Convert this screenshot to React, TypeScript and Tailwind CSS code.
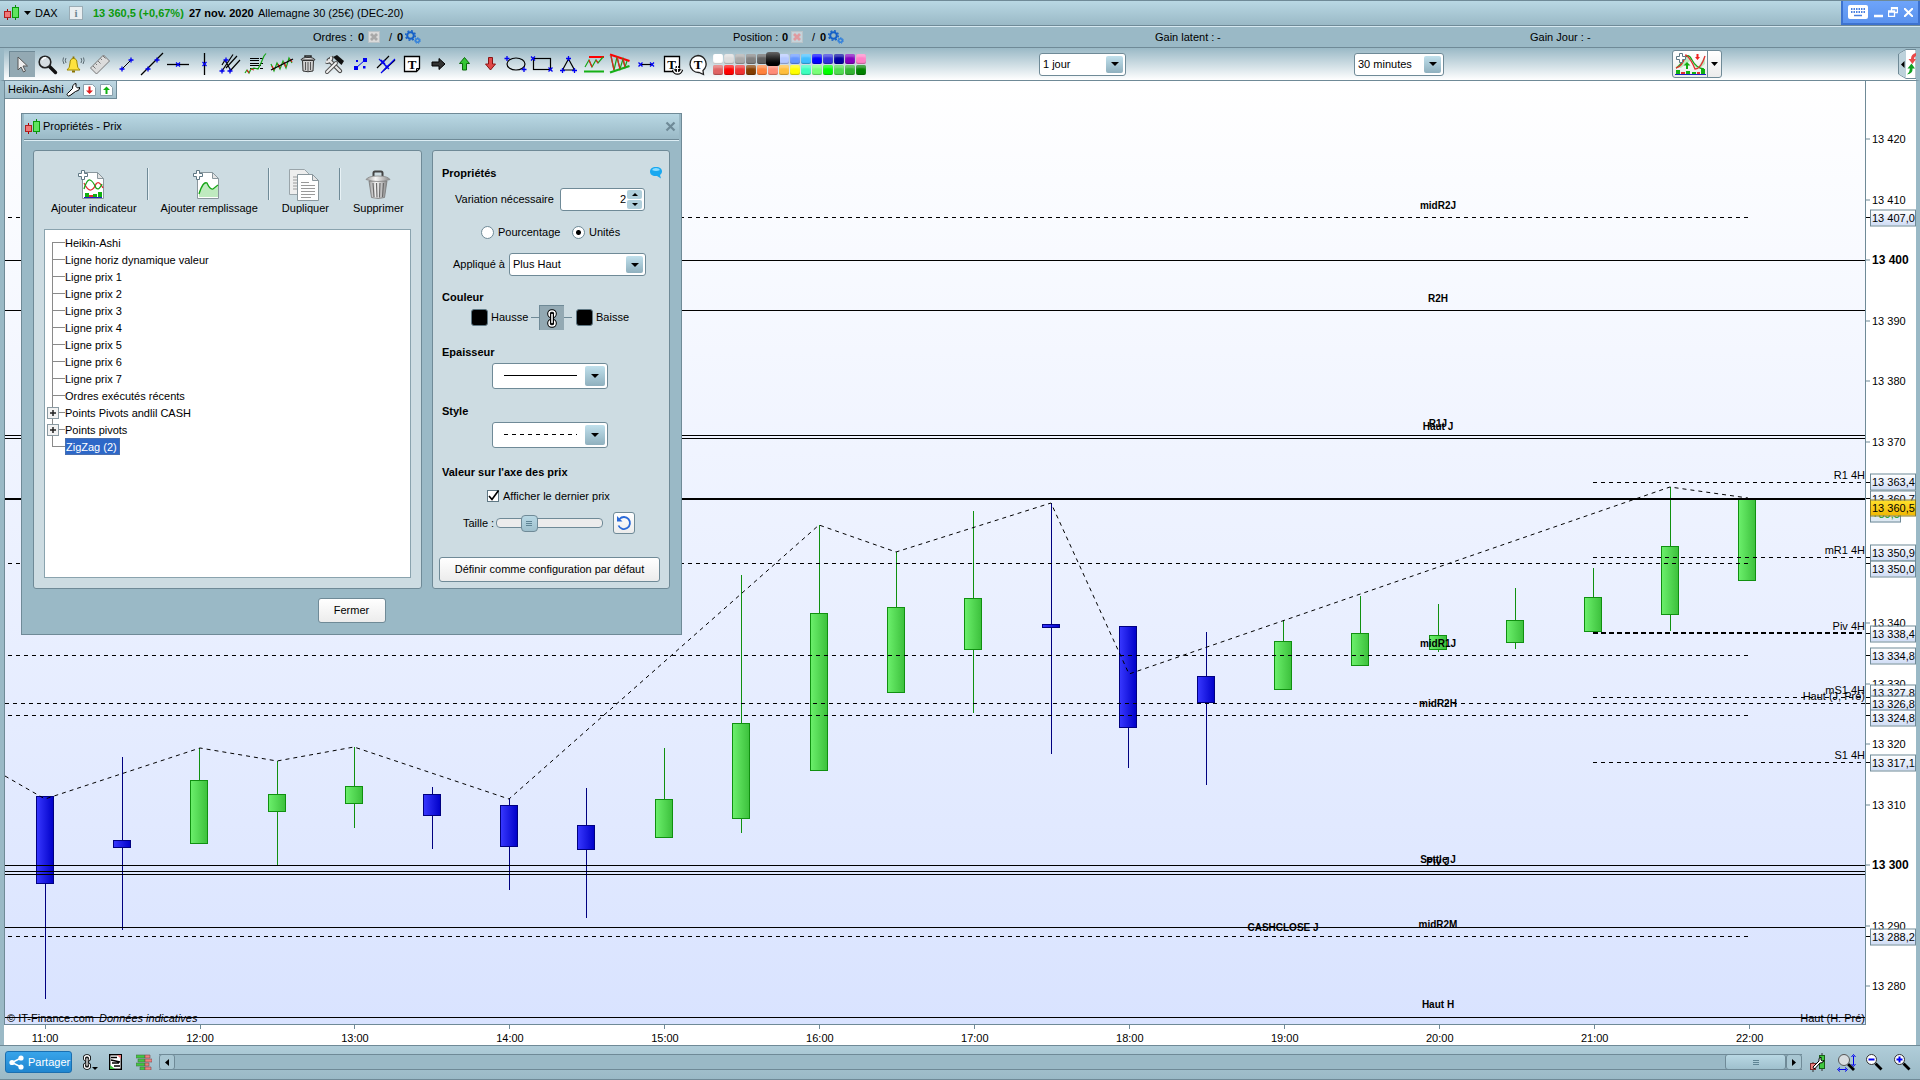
import React from "react";

/* ---------- shared drawing helpers ---------- */

const Plus = ({ x, y }: { x: number; y: number }) => (
  <path d={`M${x - 2.5} ${y}h5M${x} ${y - 2.5}v5`} stroke="#0000f0" strokeWidth="1.3" />
);
const Cross = ({ x, y }: { x: number; y: number }) => (
  <path d={`M${x - 2} ${y - 2}l4 4M${x + 2} ${y - 2}l-4 4`} stroke="#0000f0" strokeWidth="1.3" />
);

const CandlesIcon = () => (
  <svg width="16" height="18" viewBox="0 0 16 18" fill="none" className="shrink-0">
    <path d="M3.5 5v11" stroke="#b00000" />
    <rect x="0.5" y="7.500" width="6" height="6" fill="#f07878" stroke="#b02020" />
    <path d="M11.500 1v15" stroke="#0a8a0a" />
    <rect x="8.500" y="3.500" width="6" height="10" fill="#5fe45f" stroke="#0a9a0a" />
  </svg>
);

const GearsIcon = () => (
  <svg width="16" height="14" viewBox="0 0 16 14" fill="none" className="shrink-0">
    <circle cx="5.500" cy="5.500" r="3.300" stroke="#1560c8" strokeWidth="2" />
    <circle cx="5.500" cy="5.500" r="4.800" stroke="#1560c8" strokeWidth="1.500" strokeDasharray="1.900 1.870" />
    <circle cx="12.500" cy="10.500" r="1.800" stroke="#2f7fdd" strokeWidth="1.400" />
    <circle cx="12.500" cy="10.500" r="2.900" stroke="#2f7fdd" strokeWidth="1" strokeDasharray="1.300 1.300" />
  </svg>
);

const CancelIcon = ({ color, back }: { color: string; back: string }) => (
  <svg width="12" height="12" viewBox="0 0 12 12" className="shrink-0">
    <rect x="0.500" y="0.500" width="11" height="11" fill={back} stroke="#b9c3c8" />
    <path d="M3 3l6 6M9 3l-6 6" stroke={color} strokeWidth="2.800" />
  </svg>
);

const ChainIcon = ({ w = 12, h = 19 }: { w?: number; h?: number }) => (
  <svg width={w} height={h} viewBox="0 0 12 19" fill="none">
    <g stroke="#000" strokeWidth="3.600">
      <rect x="3" y="2" width="6" height="5.500" rx="2.700" />
      <rect x="3" y="11.500" width="6" height="5.500" rx="2.700" />
    </g>
    <g stroke="#fff" strokeWidth="1.600">
      <rect x="3" y="2" width="6" height="5.500" rx="2.700" />
      <rect x="3" y="11.500" width="6" height="5.500" rx="2.700" />
    </g>
    <path d="M6 5.500v8" stroke="#000" strokeWidth="4" strokeLinecap="round" />
    <path d="M6 5.500v8" stroke="#fff" strokeWidth="1.600" strokeLinecap="round" />
  </svg>
);

const TrashIcon = () => (
  <svg width="26" height="30" viewBox="0 0 26 30" fill="none">
    <defs>
      <linearGradient id="bin">
        <stop offset="0" stopColor="#9c9c9c" />
        <stop offset="0.400" stopColor="#f6f6f6" />
        <stop offset="1" stopColor="#8a8a8a" />
      </linearGradient>
    </defs>
    <path d="M8.500 6.500V3q0-1.500 1.500-1.500h6q1.500 0 1.500 1.500v3.500" stroke="#444" strokeWidth="2" />
    <path d="M4 11h18l-2.500 16.500q-6.500 2-13 0z" fill="url(#bin)" stroke="#777" strokeWidth=".8" />
    <path d="M8 13l1 14M11.500 13l.5 14.500M15 13l-.5 14.500M18.500 13l-1 14" stroke="#6a6a6a" strokeWidth="1.200" />
    <path d="M1 9.500Q3 6 13 6t12 3.500Q13 13.500 1 9.500z" fill="url(#bin)" stroke="#888" strokeWidth=".8" />
  </svg>
);

/* ---------- drawing toolbar ---------- */

const tools: { name: string; icon: React.ReactNode }[] = [
  {
    name: "Pointeur",
    icon: <path d="M9 6v13l3-3 2.500 5 2-1-2.500-5h4.500z" fill="#eee" stroke="#555" />,
  },
  {
    name: "Zoom",
    icon: (
      <>
        <path d="M14.500 15.500l6 6" stroke="#111" strokeWidth="3.400" strokeLinecap="round" />
        <circle cx="10" cy="11" r="5.800" fill="#d5dde1" stroke="#222" strokeWidth="1.600" />
        <path d="M7 9q1.500-2.500 4-2.500" stroke="#fff" strokeWidth="1.500" />
      </>
    ),
  },
  {
    name: "Alerte",
    icon: (
      <>
        <path d="M6 19q3-2 3-7 0-4.500 3.500-4.500T16 12q0 5 3 7z" fill="#ffe23d" stroke="#a08a00" />
        <path d="M12.500 5.500v2M11 20.500h3" stroke="#8a7400" strokeWidth="1.800" />
        <path d="M5 7q-1.500 2 0 5M2.500 6.500q-1.500 3 .5 6.500M20 7q1.500 2 0 5M22.500 6.500q1.500 3-.5 6.500" stroke="#5b6b73" />
      </>
    ),
  },
  {
    name: "Règle",
    icon: (
      <>
        <path d="M3.500 17L16.500 4l6 6L9.500 23z" fill="#dcdcdc" stroke="#777" />
        <path d="M6 15l2.500 2.500M8.500 12.500l1.500 1.500M11 10l2.500 2.500M13.500 7.500L15 9M16 5l2.500 2.500" stroke="#777" />
      </>
    ),
  },
  { name: "Segment", icon: <><path d="M9 18l9-9" stroke="#000" /><Plus x={9} y={18} /><Plus x={18} y={9} /></> },
  { name: "Droite", icon: <><path d="M2 24L24 2" stroke="#000" strokeWidth="1.300" /><Plus x={9} y={18} /><Plus x={18} y={9} /></> },
  { name: "Ligne horizontale", icon: <><path d="M2 13.500h22" stroke="#000" strokeWidth="1.300" /><Cross x={13} y={13.5} /></> },
  { name: "Ligne verticale", icon: <><path d="M13.500 2v22" stroke="#000" strokeWidth="1.300" /><Cross x={13.5} y={13} /></> },
  {
    name: "Fourche",
    icon: (
      <>
        <path d="M5 20L16 3.500M8 9l-3 5M9 17l11-12M13 20l10-11M8 9l6 11" stroke="#000" strokeWidth="1.200" />
        <Plus x={9} y={9} /><Plus x={5} y={20} /><Plus x={13} y={20} />
      </>
    ),
  },
  {
    name: "Retracement",
    icon: (
      <>
        <path d="M7 7.500h13M7 9.500h9M7 12.500h13M7 14.500h11M7 17.500h13" stroke="#000" strokeDasharray="9 1" />
        <path d="M2 22l2-3 2 3 2-4 3-1 4 1 3-6 3-7 2-2.500" stroke="#16a516" strokeWidth="1.200" />
        <path d="M4 19l2 3M8 18l3 1" stroke="#e02020" strokeWidth="1.300" />
      </>
    ),
  },
  {
    name: "Régression",
    icon: (
      <>
        <path d="M2 13l3 7 3-8 3 6 3-8 3 7 3-10 3 5" stroke="#16a516" strokeWidth="1.200" />
        <path d="M3 15l2 4M9 13l2 4M15 11l2 5M21 8l2 3" stroke="#e02020" strokeWidth="1.300" />
        <path d="M2 19L24 8" stroke="#000" strokeWidth="1.300" />
      </>
    ),
  },
  {
    name: "Supprimer les objets",
    icon: (
      <>
        <path d="M10 6.500V5h6v1.500" stroke="#222" strokeWidth="1.500" />
        <path d="M7.500 9.500h11l-.5 10.500q-5 1.500-10 0z" fill="#d0d0d0" stroke="#333" />
        <path d="M10.500 11v8M13 11v9M15.500 11v8" stroke="#555" />
        <path d="M6 9q.5-2.500 7-2.500T20 9z" fill="#e4e4e4" stroke="#333" />
      </>
    ),
  },
  {
    name: "Configurer",
    icon: (
      <>
        <path d="M8 9l11 11" stroke="#444" strokeWidth="4.400" strokeLinecap="round" />
        <path d="M5 10.500a4 4 0 0 0 5-5" stroke="#444" strokeWidth="4.400" />
        <path d="M8 9l11 11" stroke="#e6e6e6" strokeWidth="2.400" strokeLinecap="round" />
        <path d="M5 10.500a4 4 0 0 0 5-5" stroke="#e6e6e6" strokeWidth="2.400" />
        <path d="M6 21l9-9" stroke="#555" strokeWidth="4" strokeLinecap="round" />
        <path d="M6 21l9-9" stroke="#f4f4f4" strokeWidth="2" strokeLinecap="round" />
        <path d="M12 6l4-2 7 6-2.500 4-5-4.500z" fill="#111" />
      </>
    ),
  },
  {
    name: "Segment mesuré",
    icon: (
      <>
        <path d="M9 17l9-8" stroke="#0000f0" />
        <path d="M7 15h4v4H7zM16 7h4v4h-4zM9 9h2v2H9zM16 15h2.500v2.500H16z" fill="#0000f0" />
      </>
    ),
  },
  {
    name: "Canal",
    icon: (
      <>
        <path d="M4 17L16 5M10 20L22 9" stroke="#000" strokeWidth="1.200" />
        <path d="M8 22L22 8M6 8l9 9" stroke="#0000f0" strokeWidth="1.200" />
        <Cross x={10} y={11} /><Cross x={14} y={16} />
      </>
    ),
  },
  {
    name: "Texte",
    icon: (
      <>
        <path d="M5.500 5.500h15v12l-3 3h-12z" fill="#fff" stroke="#000" strokeWidth="1.300" />
        <path d="M20 17.500h-2.500V20" stroke="#000" />
        <text x="13" y="17.500" fontSize="13" fontWeight="bold" textAnchor="middle" fontFamily="Liberation Serif, serif" fill="#000">T</text>
      </>
    ),
  },
  { name: "Flèche droite", icon: <path d="M7 11h7V7.500l6 5.500-6 5.500V15H7z" fill="#333" stroke="#000" /> },
  { name: "Flèche haut", icon: <path d="M13.500 6.500l5 6h-3v6.500h-4v-6.500h-3z" fill="#34c634" stroke="#0a6a0a" /> },
  { name: "Flèche bas", icon: <path d="M13.500 19l5-6h-3V6.500h-4V13h-3z" fill="#e04848" stroke="#8a1414" /> },
  { name: "Ellipse", icon: <><ellipse cx="13" cy="13" rx="9" ry="6" stroke="#000" strokeWidth="1.200" /><Plus x={4} y={7.5} /><Plus x={21} y={18.5} /></> },
  { name: "Rectangle", icon: <><rect x="4.500" y="7.500" width="17" height="11" stroke="#000" strokeWidth="1.200" /><Cross x={4} y={7.5} /><Cross x={21.5} y={18.5} /></> },
  { name: "Triangle", icon: <><path d="M7.500 19L13.500 8l6 11z" stroke="#000" strokeWidth="1.200" /><Plus x={13.5} y={7.5} /><Plus x={7.5} y={19.5} /><Plus x={19.5} y={19.5} /></> },
  {
    name: "Support résistance",
    icon: (
      <>
        <path d="M8 6h15" stroke="#f00" strokeWidth="2" />
        <path d="M3 20.500h20" stroke="#16b016" strokeWidth="2" />
        <path d="M4 16l4-7 3 7 4-7 2 3 5-6" stroke="#16a516" strokeWidth="1.200" />
        <path d="M8 9l3 7M15 9l2 3" stroke="#e02020" strokeWidth="1.200" />
      </>
    ),
  },
  {
    name: "Triangle de prix",
    icon: (
      <>
        <path d="M3 3.500L22.500 10" stroke="#f00" strokeWidth="2.200" />
        <path d="M3 21.500L22.500 15" stroke="#16b016" strokeWidth="2.200" />
        <path d="M4 5l3 14 3-13 3 12 3-10 2 8 2-6" stroke="#16a516" strokeWidth="1.200" />
        <path d="M4 5l3 14M10 6l3 12M16 8l2 8" stroke="#e02020" strokeWidth="1.200" />
      </>
    ),
  },
  { name: "Mesure horizontale", icon: <><path d="M8 13.500h11" stroke="#000" strokeWidth="1.200" /><Cross x={7.5} y={13.5} /><Cross x={19} y={13.5} /></> },
  {
    name: "Texte ancré",
    icon: (
      <>
        <path d="M5.500 5.500h15v15h-15z" fill="#fff" stroke="#000" strokeWidth="1.300" />
        <text x="12.500" y="17.500" fontSize="13" fontWeight="bold" textAnchor="middle" fontFamily="Liberation Serif, serif" fill="#000">T</text>
        <path d="M18.500 15v7M16.500 17.500h4M14.500 18.500q1 3.500 4 3.500t4-3.500" stroke="#000" strokeWidth="3.400" />
        <path d="M18.500 15v7M16.500 17.500h4M14.500 18.500q1 3.500 4 3.500t4-3.500" stroke="#fff" strokeWidth="1.200" />
      </>
    ),
  },
  {
    name: "Commentaire",
    icon: (
      <>
        <path d="M13 4.500a8.500 8.500 0 1 0 1 17l4.500 2-.5-4A8.500 8.500 0 0 0 13 4.500z" fill="#fff" stroke="#222" strokeWidth="1.300" />
        <text x="13" y="17.500" fontSize="13" fontWeight="bold" textAnchor="middle" fontFamily="Liberation Serif, serif" fill="#000">T</text>
      </>
    ),
  },
];

const palette = [
  ["#ffffff", "#dcdcdc", "#aaaaaa", "#808080", "#606060", "#000000", "#b4c8ff", "#6496ff", "#40beff", "#0000ff", "#3232dc", "#0000a0", "#8200be", "#ff82c8"],
  ["#e06464", "#ff0000", "#f03232", "#823c00", "#ff823c", "#ff8c78", "#ffbe3c", "#ffff00", "#3cffbe", "#78ff78", "#00ff00", "#50dc50", "#32b432", "#008200"],
];

/* ---------- generic controls ---------- */

const Arrow = ({ className }: { className: string }) => (
  <span
    className={`pointer-events-none absolute flex items-center justify-center rounded-xs bg-linear-to-b from-[#c0e0ec] to-[#8fb0be] ${className}`}
  >
    <svg width="8" height="4" viewBox="0 0 8 4"><path d="M0 0h8L4 4z" /></svg>
  </span>
);

function Select({ label, id, value, className }: { label: string; id?: string; value: string; className: string }) {
  return (
    <span className={`relative block shrink-0 ${className}`}>
      <select
        id={id}
        aria-label={label}
        className="block h-[23px] w-full appearance-none rounded-[3px] border border-[#6f8a97] bg-white pl-[3px] text-[11px] leading-[13px]"
      >
        <option>{value}</option>
      </select>
      <Arrow className="right-[3px] top-[3px] h-[17px] w-[17px]" />
    </span>
  );
}

function LineSelect({ label, dash }: { label: string; dash?: string }) {
  return (
    <span className="relative ml-[53px] block h-[26px] w-[116px]">
      <select aria-label={label} className="block h-full w-full appearance-none rounded-[3px] border border-[#6f8a97] bg-white">
        <option value="1" aria-label={label} />
      </select>
      <svg className="pointer-events-none absolute left-[12px] top-[12px]" width="73" height="1">
        <path d="M0 .5h73" stroke="#000" strokeDasharray={dash} />
      </svg>
      <Arrow className="right-[3px] top-[3px] h-5 w-5" />
    </span>
  );
}

/* ---------- chart data, in plot units ---------- */

const LEFT = 5;
const TOP = 81;
const W = 1860;
const H = 943;
const px = (x: number) => `${((x - LEFT) / W) * 100}%`;
const py = (y: number) => `${((y - TOP) / H) * 100}%`;

const FIRST = 45;
const STEP = 77.4;

type Candle = [up: boolean, high: number, bodyTop: number, bodyBottom: number, low: number];
const candles: Candle[] = [
  [false, 796, 796, 883, 999],
  [false, 757, 840, 847, 930],
  [true, 748, 780, 843, 843],
  [true, 761, 794, 811, 865],
  [true, 747, 786, 803, 828],
  [false, 787, 794, 815, 849],
  [false, 799, 805, 846, 890],
  [false, 788, 825, 849, 918],
  [true, 748, 799, 837, 837],
  [true, 575, 723, 818, 833],
  [true, 525, 613, 770, 770],
  [true, 552, 607, 692, 692],
  [true, 511, 598, 649, 713],
  [false, 503, 624, 627, 754],
  [false, 626, 626, 727, 768],
  [false, 632, 676, 702, 785],
  [true, 620, 641, 689, 689],
  [true, 596, 633, 665, 665],
  [true, 604, 635, 649, 652],
  [true, 588, 620, 642, 649],
  [true, 568, 597, 631, 631],
  [true, 487, 546, 614, 631],
  [true, 498, 498, 580, 580],
];

const zigzag = "5,776 45,799 200,748 277,761 354,747 509,799 819,525 896,552 1051,503 1129,674 1670,487 1748,498";

const solidLines = [260, 310, 435, 438, 865, 871, 874, 927, 1017];
const dashedLines: [number, number, number][] = [
  [217, 8, 1748],
  [563, 8, 1748],
  [655, 8, 1748],
  [703, 5, 1865],
  [715, 8, 1748],
  [936, 8, 1748],
  [482, 1593, 1865],
  [557, 1593, 1865],
  [697, 1593, 1865],
  [762, 1593, 1865],
];

const pivotLabels: [string, number, number][] = [
  ["midR2J", 1438, 206],
  ["R2H", 1438, 299],
  ["R1J", 1438, 424],
  ["Haut J", 1438, 427],
  ["midR1J", 1438, 644],
  ["midR2H", 1438, 704],
  ["Piv J", 1438, 862],
  ["Settle J", 1438, 860],
  ["midR2M", 1438, 925],
  ["CASHCLOSE J", 1283, 928],
  ["Haut H", 1438, 1005],
];

const edgeLabels: [string, number][] = [
  ["R1 4H", 475],
  ["mR1 4H", 550],
  ["Piv 4H", 626],
  ["mS1 4H", 690],
  ["Haut (J, Pré)", 696],
  ["S1 4H", 755],
  ["Haut (H. Pré)", 1018],
];

const axisPrices = [13420, 13410, 13400, 13390, 13380, 13370, 13340, 13330, 13320, 13310, 13300, 13290, 13280];
const priceY = (p: number) => 865 - (p - 13300) * 6.05;
const formatPrice = (p: number) => `13 ${p - 13000}`;

const priceTags: [string, number, number][] = [
  ["13 407,0", 218, 217],
  ["13 363,4", 482, 482],
  ["13 360,7", 499, 498],
  ["13 350,9", 553, 557],
  ["13 350,0", 569, 563],
  ["13 338,4", 634, 633],
  ["13 334,8", 656, 655],
  ["13 327,8", 693, 697],
  ["13 326,8", 704, 703],
  ["13 324,8", 718, 715],
  ["13 317,1", 763, 762],
  ["13 288,2", 937, 936],
];

const hours = ["11:00", "12:00", "13:00", "14:00", "15:00", "16:00", "17:00", "18:00", "19:00", "20:00", "21:00", "22:00"];

function Plot() {
  return (
    <div className="relative min-w-0 flex-1 overflow-hidden border-x border-[#6f8a97] bg-linear-to-b from-white to-[#d9e3ff]">
      <svg className="absolute inset-0 h-full w-full" viewBox={`${LEFT} ${TOP} ${W} ${H}`} preserveAspectRatio="none" fill="none">
        <defs>
          <linearGradient id="up">
            <stop offset="0" stopColor="#6cf06c" />
            <stop offset="1" stopColor="#3cc03c" />
          </linearGradient>
          <linearGradient id="down">
            <stop offset="0" stopColor="#3838ff" />
            <stop offset="1" stopColor="#0000c8" />
          </linearGradient>
        </defs>
        <g shapeRendering="crispEdges">
          {candles.map(([up, high, top, bottom, low], i) => {
            const x = Math.floor(FIRST + i * STEP) + 0.5;
            return (
              <g key={i} stroke={up ? "#109010" : "#000080"}>
                <path d={`M${x} ${high}V${low}`} />
                <rect x={x - 9} y={top + 0.5} width="17" height={bottom - top} fill={up ? "url(#up)" : "url(#down)"} />
              </g>
            );
          })}
          {solidLines.map((y) => (
            <path key={y} d={`M5 ${y + 0.5}H1865`} stroke="#000" />
          ))}
          <path d="M5 499H1865" stroke="#000" strokeWidth="2" />
          {dashedLines.map(([y, from, to]) => (
            <path key={y} d={`M${from} ${y + 0.5}H${to}`} stroke="#000" strokeDasharray="4 4" />
          ))}
          <path d="M1593 633H1865" stroke="#000" strokeWidth="2" strokeDasharray="5 3" />
        </g>
        <polyline points={zigzag} stroke="#000" strokeDasharray="4 4" />
      </svg>

      {pivotLabels.map(([text, x, y]) => (
        <span
          key={text}
          className="absolute -translate-x-1/2 -translate-y-1/2 whitespace-nowrap text-[10px] leading-3 font-bold"
          style={{ left: px(x), top: py(y) }}
        >
          {text}
        </span>
      ))}
      {edgeLabels.map(([text, y]) => (
        <span key={text} className="absolute right-0 -translate-y-1/2 whitespace-nowrap text-[11px] leading-3" style={{ top: py(y) }}>
          {text}
        </span>
      ))}
      <p className="absolute bottom-0 left-0.5 text-[11px] leading-3">
        © IT-Finance.com <i className="ml-0.5">Données indicatives</i>
      </p>

      <div className="absolute left-0 top-0 flex h-[18px] items-center border-r border-b border-[#6f8a97] bg-linear-to-b from-[#bfd8e3] to-[#a3c0cc] pr-[3px] pl-[3px]">
        <span className="w-[58px]">Heikin-Ashi</span>
        <button aria-label="Configurer Heikin-Ashi" className="mr-[3px]">
          <svg width="14" height="14" viewBox="0 0 14 14" fill="none">
            <path d="M1.500 12.500q-1-1 0-2l5-5q-.5-3.500 2-4.500l1.500-.5v3l1.500 1.500 2.500-.5q-.5 3.500-4.500 4L4 12.500q-1.500 1-2.500 0z" fill="#fff" stroke="#000" />
          </svg>
        </button>
        <button aria-label="Descendre" className="mr-1">
          <svg width="13" height="12" viewBox="0 0 13 12">
            <path d="M.5.500h9l3 3v8H.5z" fill="#fff" stroke="#8aa0ac" />
            <path d="M6.500 10L3 6.500h2.500V2.500h2v4H10z" fill="#e02020" />
          </svg>
        </button>
        <button aria-label="Monter">
          <svg width="13" height="12" viewBox="0 0 13 12">
            <path d="M.5.500h9l3 3v8H.5z" fill="#fff" stroke="#8aa0ac" />
            <path d="M6.500 2.500L3 6h2.500v4h2V6H10z" fill="#10b010" />
          </svg>
        </button>
      </div>
    </div>
  );
}

function PriceAxis() {
  return (
    <div className="relative w-[50px] shrink-0 overflow-hidden bg-white">
      {axisPrices.map((p) => (
        <div key={p} className="absolute left-0 flex -translate-y-1/2 items-center" style={{ top: py(priceY(p)) }}>
          <span className="h-px w-1 bg-[#6f8a97]" />
          <span className={p % 100 === 0 ? "ml-0.5 whitespace-nowrap text-[12px] font-bold" : "ml-0.5 whitespace-nowrap"}>{formatPrice(p)}</span>
        </div>
      ))}
      {priceTags.map(([text, y, tick]) => (
        <React.Fragment key={text}>
          <span className="absolute left-0 h-px w-1 bg-black" style={{ top: py(tick) }} />
          <span
            className="absolute left-1 h-[17px] w-[46px] -translate-y-1/2 whitespace-nowrap border border-[#6f8a97] bg-linear-to-b from-white to-[#cfdcf5] pl-px text-[11px] leading-[15px]"
            style={{ top: py(y) }}
          >
            {text}
          </span>
        </React.Fragment>
      ))}
      <span
        className="absolute left-1 h-[17px] w-[31px] -translate-y-1/2 border border-[#6f8a97] bg-[#dde8f2] pl-px text-[11px] leading-[15px] text-[#10a010]"
        style={{ top: py(514) }}
      >
        +89,5
      </span>
      <span
        className="absolute left-1 h-[17px] w-[46px] -translate-y-1/2 whitespace-nowrap border border-[#8a7a20] bg-linear-to-b from-[#ffe02a] to-[#f0b800] pl-px text-[11px] leading-[15px]"
        style={{ top: py(508) }}
      >
        13 360,5
      </span>
    </div>
  );
}

/* ---------- properties dialog ---------- */

const treeRows: [string, boolean][] = [
  ["Heikin-Ashi", false],
  ["Ligne horiz dynamique valeur", false],
  ["Ligne prix 1", false],
  ["Ligne prix 2", false],
  ["Ligne prix 3", false],
  ["Ligne prix 4", false],
  ["Ligne prix 5", false],
  ["Ligne prix 6", false],
  ["Ligne prix 7", false],
  ["Ordres exécutés récents", false],
  ["Points Pivots andlil CASH", true],
  ["Points pivots", true],
  ["ZigZag (2)", false],
];

const Page = ({ children }: { children: React.ReactNode }) => (
  <svg width="34" height="32" viewBox="0 0 34 32" fill="none">
    <path d="M5.500 3.500h15l6 6v20h-21z" fill="#fff" stroke="#8a979d" />
    <path d="M20.500 3.500v6h6z" fill="#e4e4e4" stroke="#8a979d" />
    {children}
    <path d="M4.500 1.500h3v3h3v3h-3v3h-3v-3h-3v-3h3z" fill="#fff" stroke="#5f7884" />
  </svg>
);

const IndicatorIcon = () => (
  <Page>
    <path d="M7 14q4 8 7 7t5-6q3-4 7 4" stroke="#e03030" strokeWidth="1.300" />
    <path d="M7 20q3-10 6-9 3 1 6 8 3 3 6-4" stroke="#16a516" strokeWidth="1.300" />
    <path d="M8 24h4v4H8zM16 25h4v3h-4zM21 23h4v5h-4z" fill="#10b010" />
    <path d="M12 26h4v2h-4z" fill="#e03030" />
    <path d="M7 28.500h18" stroke="#2020c0" />
  </Page>
);
const FillIcon = () => (
  <Page>
    <path d="M7 28V24q4-12 8-11 3 7 6 7l5-3v11z" fill="#bfeabf" />
    <path d="M7 25q4-13 8-11 3 7 6 6l5-4" stroke="#16a516" strokeWidth="1.300" />
  </Page>
);
const DuplicateIcon = () => (
  <svg width="34" height="32" viewBox="0 0 34 32" fill="none">
    <path d="M1.500.500h15l5 5v20h-20z" fill="#eee" stroke="#9aa5aa" />
    <path d="M5 11h12M5 14h12M5 17h12M5 20h12M5 8h8" stroke="#9a9a9a" />
    <path d="M9.500 5.500h15l6 6v20h-21z" fill="#fff" stroke="#8a979d" />
    <path d="M24.500 5.500v6h6z" fill="#e4e4e4" stroke="#8a979d" />
    <path d="M13 13.500h8M13 16.500h14M13 19.500h14M13 22.500h14M13 25.500h14M13 28.500h10" stroke="#9a9a9a" />
  </svg>
);

const Separator = () => <span className="mr-[12px] ml-[10px] h-8 w-0.5 border-r border-l border-r-[#e8f2f6] border-l-[#6f8a97]" />;

const ToolButton = ({ label, icon }: { label: string; icon: React.ReactNode }) => (
  <button className="flex flex-col items-center whitespace-nowrap">
    <span className="flex h-[33px] items-center">{icon}</span>
    <span className="leading-[14px]">{label}</span>
  </button>
);

const plainButton = "rounded-[3px] border border-[#6f8a97] bg-linear-to-b from-white to-[#ececec]";

function Dialog() {
  return (
    <section
      aria-label="Propriétés - Prix"
      className="absolute top-[113px] left-[21px] flex w-[661px] flex-col border border-[#6f8a97] bg-[#9ab9c6] px-[2px] pb-[11px]"
    >
      <header className="flex h-[26px] items-center border-b border-[#6f8a97] bg-linear-to-b from-[#b9d8e4] to-[#9ab9c6] pr-[3px] pl-px shadow-[0_1px_0_#dcedf4]">
        <CandlesIcon />
        <h2 className="ml-[2px] flex-1">Propriétés - Prix</h2>
        <button aria-label="Fermer la fenêtre">
          <svg width="11" height="11" viewBox="0 0 11 11"><path d="M1.500 1.500l8 8M9.500 1.500l-8 8" stroke="#6f8a97" strokeWidth="2.200" /></svg>
        </button>
      </header>

      <div className="mt-[10px] flex gap-[10px] pr-[9px] pl-[9px]">
        <div className="flex w-[389px] flex-col rounded-[3px] border border-[#6f8a97] bg-[#cddce2] px-[10px] pt-[17px] pb-[10px]">
          <div className="flex items-start pl-[7px]">
            <ToolButton label="Ajouter indicateur" icon={<IndicatorIcon />} />
            <Separator />
            <ToolButton label="Ajouter remplissage" icon={<FillIcon />} />
            <Separator />
            <ToolButton label="Dupliquer" icon={<DuplicateIcon />} />
            <Separator />
            <ToolButton label="Supprimer" icon={<TrashIcon />} />
          </div>
          <ul className="mt-[14px] h-[349px] border border-[#8aa3ae] bg-white pt-1 pl-[7px]">
            {treeRows.map(([name, expandable], i) => {
              const last = i === treeRows.length - 1;
              return (
                <li key={name} className="flex h-[17px] items-center">
                  <span className="relative flex h-full w-[13px] flex-col">
                    <span className={i === 0 ? "h-[9px] border-b border-[#8a8a8a]" : "h-[9px] border-b border-l border-[#8a8a8a]"} />
                    <span className={last ? "flex-1" : "flex-1 border-l border-[#8a8a8a]"} />
                    {expandable && (
                      <button
                        aria-label={`Développer ${name}`}
                        className="absolute top-[3px] -left-[5px] flex h-3 w-3 items-center justify-center border border-[#8a9aa2] bg-[#f2f2f2]"
                      >
                        <svg width="6" height="6" viewBox="0 0 6 6"><path d="M0 3h6M3 0v6" stroke="#222" strokeWidth="1.500" /></svg>
                      </button>
                    )}
                  </span>
                  <span className={last ? "h-[17px] border border-[#4a6fae] bg-[#2e68c8] pr-0.5 leading-[16px] text-white" : "pt-px"}>{name}</span>
                </li>
              );
            })}
          </ul>
        </div>

        <div className="flex flex-1 flex-col rounded-[3px] border border-[#6f8a97] bg-[#cddce2] pt-[14px] pr-[9px] pb-[5px] pl-[6px]">
          <div className="flex items-center justify-between pl-[3px]">
            <h3 className="leading-4 font-bold">Propriétés</h3>
            <button aria-label="Aide" className="mr-[-3px]">
              <svg width="14" height="14" viewBox="0 0 14 14">
                <path d="M7 1c4 0 6 2 6 4.500 0 1.500-.8 2.800-2 3.500l1 3.500L8 10C3.500 10.500 1 8.500 1 5.500 1 3 3 1 7 1z" fill="#18a8f0" />
                <path d="M3 4q1-2 4-2t4 2q-4 2-8 0z" fill="#8adcff" />
              </svg>
            </button>
          </div>
          <div className="mt-[7px] flex items-center pl-[16px]">
            <label htmlFor="variation" className="w-[105px]">Variation nécessaire</label>
            <span className="flex h-[23px] w-[85px] items-center rounded-[3px] border border-[#6f8a97] bg-white pr-[2px]">
              <input id="variation" defaultValue="2" className="w-0 flex-1 bg-transparent text-right outline-none" />
              <span className="ml-px flex flex-col gap-px">
                <button aria-label="Augmenter" className="flex h-[9px] w-[15px] items-center justify-center rounded-xs bg-[#b0cfdb]">
                  <svg width="6" height="3" viewBox="0 0 6 3"><path d="M0 3h6L3 0z" /></svg>
                </button>
                <button aria-label="Diminuer" className="flex h-[9px] w-[15px] items-center justify-center rounded-xs bg-[#b0cfdb]">
                  <svg width="6" height="3" viewBox="0 0 6 3"><path d="M0 0h6L3 3z" /></svg>
                </button>
              </span>
            </span>
          </div>
          <div className="mt-[14px] flex h-[14px] items-center pl-[42px]">
            <input
              id="pct"
              type="radio"
              name="unit"
              className="h-[13px] w-[13px] appearance-none rounded-full border border-[#6f8a97] bg-white"
            />
            <label htmlFor="pct" className="ml-1 w-[74px]">Pourcentage</label>
            <input
              id="units"
              type="radio"
              name="unit"
              defaultChecked
              className="h-[13px] w-[13px] appearance-none rounded-full border border-[#6f8a97] bg-[radial-gradient(circle,#000_2px,#fff_3px)]"
            />
            <label htmlFor="units" className="ml-1">Unités</label>
          </div>
          <div className="mt-[14px] flex items-center pl-[14px]">
            <label htmlFor="applied" className="w-[56px]">Appliqué à</label>
            <Select label="Appliqué à" id="applied" value="Plus Haut" className="w-[137px]" />
          </div>

          <h3 className="mt-[13px] pl-[3px] leading-4 font-bold">Couleur</h3>
          <div className="flex h-[25px] items-center pl-[32px]">
            <button aria-label="Couleur hausse" className="h-[17px] w-[17px] rounded-[3px] border border-[#5f7884] bg-black" />
            <span className="ml-[3px] w-[40px]">Hausse</span>
            <span className="h-px w-2 bg-[#6f8a97]" />
            <button aria-label="Lier les couleurs" className="flex h-[25px] w-[25px] items-center justify-center border-t border-l border-[#6f8a97] bg-[#93a9b3]">
              <ChainIcon />
            </button>
            <span className="mr-1 h-px w-2 bg-[#6f8a97]" />
            <button aria-label="Couleur baisse" className="h-[17px] w-[17px] rounded-[3px] border border-[#5f7884] bg-black" />
            <span className="ml-[3px]">Baisse</span>
          </div>

          <h3 className="mt-[14px] mb-[3px] pl-[3px] leading-4 font-bold">Epaisseur</h3>
          <LineSelect label="Epaisseur" />
          <h3 className="mt-[14px] mb-[3px] pl-[3px] leading-4 font-bold">Style</h3>
          <LineSelect label="Style" dash="4 4" />
          <h3 className="mt-[16px] pl-[3px] leading-4 font-bold">Valeur sur l'axe des prix</h3>
          <label className="mt-[9px] flex h-[14px] items-center pl-[48px]">
            <span className="relative mr-1 h-3 w-3">
              <input type="checkbox" defaultChecked className="block h-3 w-3 appearance-none border border-[#5f7884] bg-white" />
              <svg className="pointer-events-none absolute top-0 left-0" width="12" height="12" viewBox="0 0 12 12">
                <path d="M2 6l3 3.500L11.500.500" fill="none" stroke="#000" strokeWidth="1.700" />
              </svg>
            </span>
            Afficher le dernier prix
          </label>
          <div className="mt-[8px] flex h-[24px] items-center pl-[24px]">
            <label htmlFor="size" className="w-[33px]">Taille :</label>
            <input
              id="size"
              type="range"
              defaultValue="27"
              className="h-[10px] w-[107px] appearance-none rounded-[4px] border border-[#6f8a97] bg-[#ececec] [&::-webkit-slider-thumb]:h-[17px] [&::-webkit-slider-thumb]:w-[17px] [&::-webkit-slider-thumb]:appearance-none [&::-webkit-slider-thumb]:rounded-[4px] [&::-webkit-slider-thumb]:border [&::-webkit-slider-thumb]:border-[#6f8a97] [&::-webkit-slider-thumb]:bg-[linear-gradient(#5f8494,#5f8494),linear-gradient(#5f8494,#5f8494),linear-gradient(#5f8494,#5f8494),linear-gradient(#b8d8e4,#9fc0cd)] [&::-webkit-slider-thumb]:bg-[size:6px_1px,6px_1px,6px_1px,100%_100%] [&::-webkit-slider-thumb]:bg-[position:center_5px,center_7px,center_9px,center] [&::-webkit-slider-thumb]:bg-no-repeat"
            />
            <button aria-label="Réinitialiser" className={`ml-[10px] flex h-[22px] w-[22px] items-center justify-center ${plainButton}`}>
              <svg width="16" height="16" viewBox="0 0 16 16" fill="none">
                <path d="M3.500 4a6 6 0 1 1-1 6.500" stroke="#2a6ad8" strokeWidth="1.800" />
                <path d="M1 1v5.500h5.500z" fill="#2a6ad8" />
              </svg>
            </button>
          </div>
          <button className={`mt-[22px] h-[25px] w-[221px] ${plainButton}`}>Définir comme configuration par défaut</button>
        </div>
      </div>
      <button className={`mt-[9px] h-[25px] w-[68px] self-center ${plainButton}`}>Fermer</button>
    </section>
  );
}

/* ---------- page ---------- */

export default function App() {
  return (
    <main className="relative flex h-screen flex-col overflow-hidden bg-[#9ab9c6] font-['Liberation_Sans',Arial,sans-serif] text-[11px] leading-[13px] text-black">
      <header className="flex h-[26px] shrink-0 items-center border-t border-b border-[#6f8a97] bg-linear-to-b from-[#b9d8e4] to-[#9ab9c6] pl-1">
        <CandlesIcon />
        <button aria-label="Choisir une valeur" className="ml-1">
          <svg width="7" height="4" viewBox="0 0 7 4"><path d="M0 0h7L3.500 4z" /></svg>
        </button>
        <h1 className="ml-1 w-[35px]">DAX</h1>
        <button aria-label="Informations" className="flex h-3 w-3 items-center justify-center bg-[#e9eef0] font-['Liberation_Serif',serif] leading-3 font-bold text-[#6c8591] outline outline-[#9aacb5]">
          i
        </button>
        <strong className="ml-[11px] w-[96px] whitespace-nowrap text-[#0c9a0c]">13 360,5 (+0,67%)</strong>
        <strong className="w-[69px] whitespace-nowrap">27 nov. 2020</strong>
        <span className="flex-1">Allemagne 30 (25€) (DEC-20)</span>
        <div className="flex h-full w-[79px] items-center justify-between border-2 border-t-0 border-[#3d72cf] bg-linear-to-b from-[#6ea4fa] to-[#5a92ee] px-[5px]">
          <button aria-label="Clavier">
            <svg width="20" height="14" viewBox="0 0 20 14">
              <rect width="20" height="14" rx="2" fill="#fff" />
              <path d="M3 4h14M3 7h14" stroke="#4a80e0" strokeWidth="2" strokeDasharray="1.500 1" />
              <path d="M6 10.500h8" stroke="#4a80e0" strokeWidth="1.500" />
            </svg>
          </button>
          <button aria-label="Réduire">
            <svg width="9" height="12" viewBox="0 0 9 12"><path d="M0 10h9" stroke="#fff" strokeWidth="2.500" /></svg>
          </button>
          <button aria-label="Restaurer">
            <svg width="10" height="10" viewBox="0 0 10 10" fill="none" stroke="#fff">
              <path d="M3.500 3.500v-3h6v5h-3M3.500 1.500h6M.5 4h6v5.500h-6zM.5 5h6" strokeWidth="1.300" />
            </svg>
          </button>
          <button aria-label="Fermer">
            <svg width="9" height="9" viewBox="0 0 9 9"><path d="M0 0l9 9M9 0L0 9" stroke="#fff" strokeWidth="2" /></svg>
          </button>
        </div>
      </header>

      <div className="grid h-[22px] shrink-0 grid-cols-[420fr_422fr_375fr_390fr] items-center border-t border-b border-t-[#d5e8f0] border-b-[#6f8a97] pl-[313px]">
        <div className="flex items-center">
          <span className="w-[45px]">Ordres :</span>
          <b className="w-[10px]">0</b>
          <CancelIcon color="#a8a8a8" back="#dadada" />
          <span className="ml-[9px] w-2">/</span>
          <b className="w-2">0</b>
          <GearsIcon />
        </div>
        <div className="flex items-center">
          <span className="w-[49px]">Position :</span>
          <b className="w-[9px]">0</b>
          <CancelIcon color="#e09a9f" back="#c6d3da" />
          <span className="ml-[9px] w-2">/</span>
          <b className="w-2">0</b>
          <GearsIcon />
        </div>
        <div className="flex">
          <span className="w-[62px]">Gain latent :</span>
          <span>-</span>
        </div>
        <div className="flex">
          <span className="w-[57px]">Gain Jour :</span>
          <span>-</span>
        </div>
      </div>

      <div className="flex h-[33px] shrink-0 items-center border-r-4 border-b border-l-4 border-r-[#9ab9c6] border-b-[#6f8a97] border-l-[#9ab9c6] bg-linear-to-b from-[#9ab9c6] to-white pl-[5px]">
        {tools.map(({ name, icon }, i) => (
          <button
            key={name}
            aria-label={name}
            title={name}
            className={i === 0 ? "h-[26px] w-[26px] shrink-0 border-t border-l border-[#6f8a97] bg-[#93a9b3]" : "h-[26px] w-[26px] shrink-0"}
          >
            <svg width="26" height="26" viewBox="0 0 26 26" fill="none" className={i === 0 ? "-mt-px -ml-px" : ""}>
              {icon}
            </svg>
          </button>
        ))}
        <div className="ml-0.5 grid shrink-0 grid-cols-[repeat(14,10px)] gap-px">
          {palette.flat().map((c, i) => (
            <button
              key={c}
              aria-label={c}
              className={
                i === 5
                  ? "z-10 -m-0.5 rounded-[3px] bg-linear-to-b from-[#666] via-[#222] to-black"
                  : "h-[10px] rounded-xs shadow-[inset_0_-1px_1px_rgba(0,0,0,.25),inset_0_3px_2px_rgba(255,255,255,.3)]"
              }
              style={i === 5 ? undefined : { backgroundColor: c }}
            />
          ))}
        </div>
        <span className="grow-[173]" />
        <Select label="Période affichée" value="1 jour" className="w-[87px]" />
        <span className="grow-[228]" />
        <Select label="Unité de temps" value="30 minutes" className="w-[90px]" />
        <span className="grow-[228]" />
        <div className={`flex h-[28px] w-[50px] shrink-0 ${plainButton}`}>
          <button aria-label="Ajouter un indicateur" className="w-[35px] border-r border-[#6f8a97] pl-0.5">
            <svg width="31" height="22" viewBox="0 0 31 22" fill="none">
              <path d="M1 14L12 3q5 8 10 13l8-13v8l-6 5-9-8-9 7z" fill="#bfeabf" />
              <path d="M1 15q4-2 8-9t8 1 12 9" stroke="#16a516" strokeWidth="1.300" />
              <path d="M1 15q6-1 10-13 5 4 9 14 6 0 10-13" stroke="#e03030" strokeWidth="1.300" />
              <path d="M12 9l-3.500 3.500H11V16h2v-3.500h2.500z" fill="#10b010" />
              <path d="M22.500 7L20 4h1.500V1h2v3H25z" fill="#f02020" />
              <path d="M1 17h4v4H1zM11 18h4v3h-4zM17 19h4v2h-4zM26 16h4v5h-4z" fill="#10b010" />
              <path d="M6 19h4v2H6zM22 19h3v2h-3z" fill="#e03030" />
              <path d="M0 21.500h31" stroke="#2020c0" />
              <path d="M4.500.5h3v3h3v3h-3v3h-3v-3h-3v-3h3z" fill="#fff" stroke="#5f7884" />
            </svg>
          </button>
          <button aria-label="Autres indicateurs" className="flex flex-1 items-center justify-center">
            <svg width="7" height="4" viewBox="0 0 7 4"><path d="M0 0h7L3.500 4z" /></svg>
          </button>
        </div>
        <span className="grow-[176]" />
        <button aria-label="Ouvrir le panneau" className="shrink-0">
          <svg width="18" height="30" viewBox="0 0 18 30" fill="none">
            <path d="M18 .5H8L.5 5v20L8 29.500h10z" fill="#fff" stroke="#6f8a97" />
            <path d="M1 5l7-4v28l-7-4z" fill="#bdd2db" />
            <path d="M6.500 12v7L3 15.500z" fill="#000" />
            <path d="M18 4q-5 1-5 6h-2.500l4 5 3.500-5h-2q0-2 2-3z" fill="#ea4a4a" />
            <path d="M9 25.500q6-1 5.500-6H17l-3.500-5-4 5H12q0 3-3 6z" fill="#10a020" />
          </svg>
        </button>
      </div>

      <div className="flex min-h-0 flex-1 pr-1 pl-1">
        <Plot />
        <PriceAxis />
      </div>

      <div className="flex h-[21px] shrink-0 px-1">
        <div className="relative flex-1 border-t border-[#6f8a97] bg-white">
          {hours.map((h, i) => (
            <div key={h} className="absolute top-0 flex w-10 -translate-x-1/2 flex-col items-center" style={{ left: px(FIRST + 1 + i * 2 * STEP) }}>
              <span className="h-1 w-px bg-[#6f8a97]" />
              <span className="mt-[3px]">{h}</span>
            </div>
          ))}
        </div>
        <div className="w-[50px] bg-white" />
      </div>

      <footer className="flex h-[35px] shrink-0 items-center border-t border-b border-[#6f8a97] bg-linear-to-b from-[#b0cdd9] to-[#9ab9c6] pb-px pr-[9px] pl-[5px]">
        <button className="flex h-[22px] w-[67px] items-center rounded-[3px] border border-[#1a6fb0] bg-linear-to-b from-[#38a4ea] to-[#1f86d0] pl-[3px] text-white">
          <svg width="15" height="15" viewBox="0 0 15 15" className="mr-1">
            <path d="M12 3L3 7.500l9 4.500" fill="none" stroke="#fff" strokeWidth="1.500" />
            <circle cx="12" cy="3" r="2.600" fill="#fff" /><circle cx="3" cy="7.500" r="2.600" fill="#fff" /><circle cx="12" cy="12" r="2.600" fill="#fff" />
          </svg>
          Partager
        </button>
        <button aria-label="Lier" className="ml-[10px] flex items-end">
          <ChainIcon w={10} h={18} />
          <svg width="6" height="4" viewBox="0 0 6 4"><path d="M0 0h6L3 3z" /></svg>
        </button>
        <button aria-label="Notes" className="ml-[11px]">
          <svg width="13" height="16" viewBox="0 0 13 16" fill="none">
            <rect x=".7" y=".7" width="11.600" height="14.600" fill="#fff" stroke="#000" strokeWidth="1.400" />
            <path d="M8 1h4v4z" fill="#f08080" /><path d="M1 15v-4l5 4z" fill="#40c040" />
            <path d="M2 3.500h6M2 6l9 2M3 9h7M5 12h6" stroke="#000" strokeWidth="1.500" />
          </svg>
        </button>
        <button aria-label="Carnet d'ordres" className="ml-[14px]">
          <svg width="16" height="16" viewBox="0 0 16 16">
            <path d="M0 1h9v3H0zM2 5h7v3H2zM0 9h9v3H0zM4 13h5v3H4z" fill="#40c840" stroke="#4a6a4a" strokeWidth=".6" />
            <path d="M9 1h5v3H9zM9 5h7v3H9zM9 9h4v3H9zM9 13h6v3H9z" fill="#f08080" stroke="#7a4a4a" strokeWidth=".6" />
          </svg>
        </button>
        <div className="ml-[7px] flex h-4 flex-1 items-stretch justify-between border-t border-b border-[#6f8a97] bg-[#9ab9c6]">
          <button aria-label="Défiler à gauche" className="-my-px flex w-4 items-center justify-center rounded-[3px] border border-[#6f8a97] bg-[#a8c6d2]">
            <svg width="4" height="7" viewBox="0 0 4 7"><path d="M4 0v7L0 3.500z" /></svg>
          </button>
          <div className="flex">
            <div className="-my-px flex w-[61px] flex-col items-center justify-center gap-px rounded-[3px] border border-[#6f8a97] bg-linear-to-b from-[#b9d8e4] to-[#9fc0cd]">
              <span className="h-px w-[6px] bg-[#5f8494]" /><span className="h-px w-[6px] bg-[#5f8494]" /><span className="h-px w-[6px] bg-[#5f8494]" />
            </div>
            <button aria-label="Défiler à droite" className="-my-px flex w-4 items-center justify-center rounded-[3px] border border-[#6f8a97] bg-[#a8c6d2]">
              <svg width="4" height="7" viewBox="0 0 4 7"><path d="M0 0v7l4-3.500z" /></svg>
            </button>
          </div>
        </div>
        <button aria-label="Options du graphique" className="ml-2">
          <svg width="16" height="19" viewBox="0 0 16 19" fill="none">
            <path d="M12 0v18M3 9v10" stroke="#333" /><rect x="9.500" y="2.500" width="5" height="13" fill="#40c840" stroke="#186018" />
            <rect x=".5" y="10.500" width="5" height="6" fill="#f08080" stroke="#7a2a2a" />
            <path d="M3 14l6-6q-1-3 2-4v3l1.500 1L14 7.500q-1 3-4 2.500l-5 5.500q-2 .5-2-1.500z" fill="#fff" stroke="#000" />
          </svg>
        </button>
        <button aria-label="Zoom automatique" className="ml-[11px]">
          <svg width="19" height="19" viewBox="0 0 19 19" fill="none">
            <path d="M11 11l6 6" stroke="#000" strokeWidth="2.800" /><circle cx="7" cy="7" r="5.500" fill="#d8dde0" stroke="#555" />
            <path d="M16.500 3v9M14.500 4l2-2.500 2 2.500M14.500 11l2 2.500 2-2.500M2 16.500h7M3 14.500l-2.500 2 2.500 2M8 14.500l2.500 2-2.500 2" stroke="#0000f0" />
          </svg>
        </button>
        <button aria-label="Zoom arrière" className="ml-[9px]">
          <svg width="18" height="18" viewBox="0 0 18 18" fill="none">
            <path d="M10.500 10.500l6 6" stroke="#000" strokeWidth="2.800" /><circle cx="6.500" cy="6.500" r="5" fill="#fff" stroke="#333" />
            <path d="M3.500 6.500h6" stroke="#0000f0" strokeWidth="2" />
          </svg>
        </button>
        <button aria-label="Zoom avant" className="ml-[10px]">
          <svg width="18" height="18" viewBox="0 0 18 18" fill="none">
            <path d="M10.500 10.500l6 6" stroke="#000" strokeWidth="2.800" /><circle cx="6.500" cy="6.500" r="5" fill="#fff" stroke="#333" />
            <path d="M3.500 6.500h6M6.500 3.500v6" stroke="#0000f0" strokeWidth="2" />
          </svg>
        </button>
      </footer>

      <Dialog />
    </main>
  );
}
